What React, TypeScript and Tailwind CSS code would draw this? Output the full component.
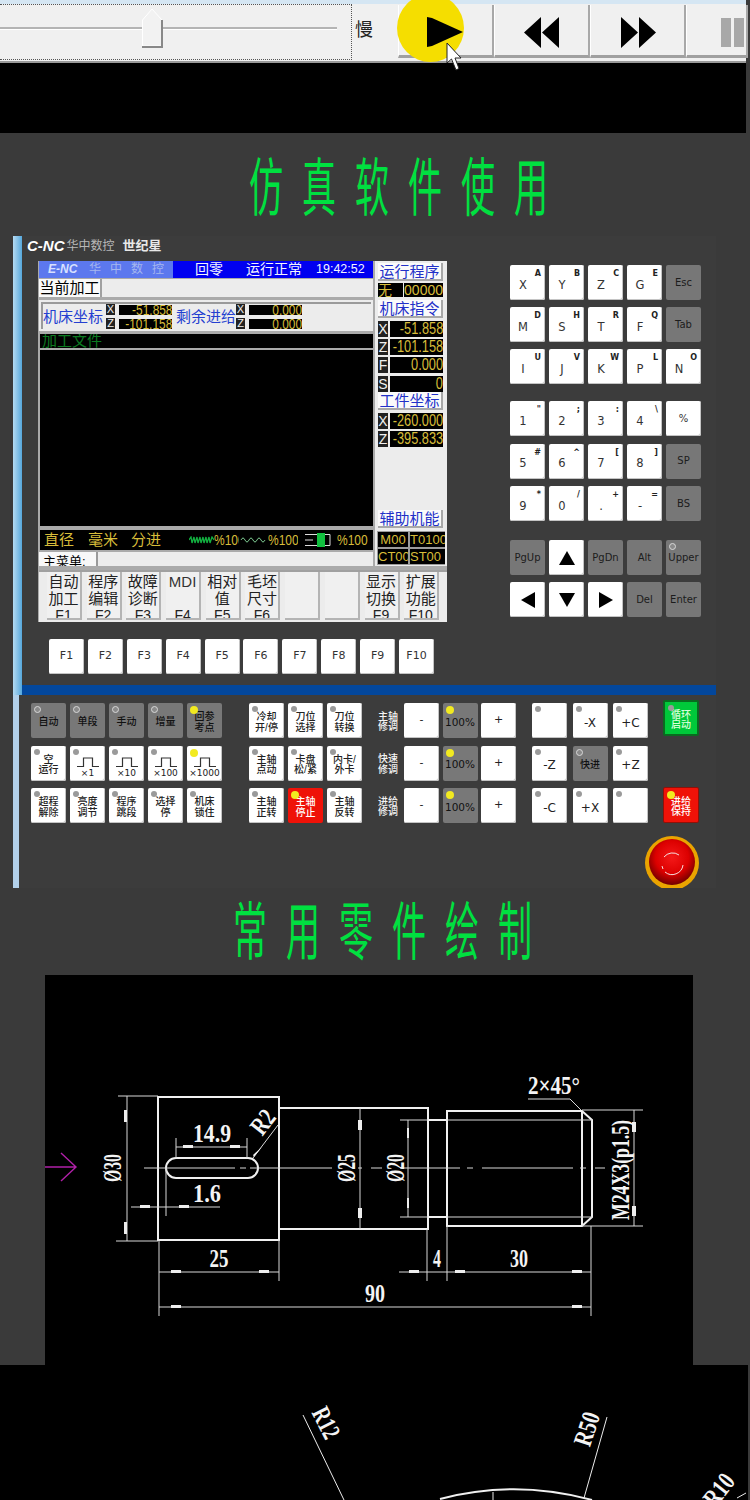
import React from "react";

const GREEN = "text-[#00e040]";

function TitleRow({ text, className }: { text: string; className: string }) {
  return (
    <div className={`flex items-center ${className}`}>
      {text.split("").map((c, i) => (
        <span key={i} className={`inline-block w-[53px] text-[34px] leading-[34px] scale-y-[1.85] origin-center font-normal ${GREEN}`}>
          {c}
        </span>
      ))}
    </div>
  );
}

function Toolbar() {
  const Btn = ({ children, w = "w-[96px]" }: { children?: React.ReactNode; w?: string }) => (
    <div className={`relative ${w} h-[53px] shrink-0 bg-[#f0f0f0] border-l border-l-white border-r-[2px] border-r-[#a8a8a8] border-b-[3px] border-b-[#a0a0a0] pt-[4px] flex items-center justify-center`}>
      {children}
    </div>
  );
  return (
    <section className="w-[746px] h-[133px] bg-black shrink-0">
      <div className="h-[63px] bg-[#e9eef0] border-b-[2px] border-b-[#9a9a9a] overflow-visible">
        <div className="h-[4px] bg-[#d5e6f3]" />
        <div className="flex items-start h-[57px] bg-[#f0f0f0]">
          <div className="relative w-[352px] h-[56px] border-y border-r border-dotted border-[#555] shrink-0">
            <div className="mt-[22px] ml-0 w-[337px] h-[3px] bg-[#b4b4b4] border-b border-white" />
            <div className="absolute left-[142px] top-[3px] w-[21px] h-[40px]">
              <svg width="21" height="40" viewBox="0 0 21 40">
                <path d="M0.5 38 V12 L10 1 L20 12 V38 Z" fill="#f2f2f2" stroke="#fff" />
                <path d="M20 12 V39 H0" fill="none" stroke="#888" strokeWidth="2" />
              </svg>
            </div>
          </div>
          <div className="w-[46px] shrink-0 pl-[3px] pt-[16px] text-[18px] leading-[20px] text-[#222]">慢</div>
          <div className="flex mt-[1px]">
            <Btn>
              <div className="absolute left-[-2px] top-[-11px] w-[67px] h-[68px] rounded-[50%] bg-[#f5de00]" />
              <svg className="relative -ml-[1px]" width="38" height="30" viewBox="0 0 38 30">
                <path d="M1 0 L6 1 L37 15 L6 29 L1 30 Z" fill="#000" />
              </svg>
              <svg className="absolute left-[47px] top-[37px] z-10" width="18" height="30" viewBox="0 0 18 30">
                <path d="M1 1 V21 L5.5 17 L10 28 L13 26.5 L9 16 L15 16 Z" fill="#fff" stroke="#222" strokeWidth="1" />
              </svg>
            </Btn>
            <Btn>
              <svg width="36" height="31" viewBox="0 0 36 31">
                <path d="M0 15.5 L17 0 V31 Z M18 15.5 L35 0 V31 Z" fill="#000" />
              </svg>
            </Btn>
            <Btn>
              <svg width="36" height="31" viewBox="0 0 36 31">
                <path d="M1 0 L18 15.5 L1 31 Z M19 0 L36 15.5 L19 31 Z" fill="#000" />
              </svg>
            </Btn>
            <Btn w="w-[62px]">
              <div className="flex gap-[3px] ml-[10px] self-center w-full pl-[24px]">
                <div className="w-[10px] h-[29px] bg-[#a8a8a8] shrink-0" />
                <div className="w-[10px] h-[29px] bg-[#a8a8a8] shrink-0" />
              </div>
            </Btn>
          </div>
        </div>
      </div>
    </section>
  );
}

const sans = "font-['Liberation_Sans',sans-serif]";

function AxisTag({ c, small }: { c: string; small?: boolean }) {
  return (
    <div className={`${small ? "w-[9px] h-[11px] text-[11px] leading-[11px]" : "w-[10px] h-[16px] text-[14px] leading-[16px]"} bg-[#222] text-[#f0f0f0] text-center ${sans} shrink-0`}>
      {c}
    </div>
  );
}

function SmallValue({ v }: { v: string }) {
  return (
    <div className={`w-[53px] h-[10px] ml-[4px] bg-black text-[#d8bd3a] text-[14px] leading-[10px] flex justify-end overflow-hidden whitespace-nowrap ${sans}`}>
      <span className="shrink-0 origin-right scale-x-[0.85]">{v}</span>
    </div>
  );
}

function CoordPair({ a, b, ml }: { a: string; b: string; ml: string }) {
  return (
    <div className={`flex flex-col gap-[3px] ${ml}`}>
      <div className="flex items-center"><AxisTag c="X" small /><SmallValue v={a} /></div>
      <div className="flex items-center"><AxisTag c="Z" small /><SmallValue v={b} /></div>
    </div>
  );
}

function Pct({ w = "w-[30px]" }: { w?: string }) {
  return (
    <span className={`${w} shrink-0 overflow-hidden text-[15px] ${sans}`}>
      <span className="inline-block origin-left scale-x-[0.8]">%100</span>
    </span>
  );
}

function ScreenLeft() {
  return (
    <div className="w-[334px] ml-[1px] shrink-0 flex flex-col">
      <div className="h-[17px] flex text-[14px] leading-[17px] text-[#f4f4ff]">
        <div className="w-[134px] bg-[#5c78ee] flex items-center pl-[9px] overflow-hidden">
          <span className={`italic font-bold text-[12px] text-[#d8e0ff] ${sans} w-[46px]`}>E-NC</span>
          <span className="text-[12px] text-[#a5b6ee] tracking-[9px] whitespace-nowrap">华中数控</span>
        </div>
        <div className="flex-1 bg-[#0000f0] flex items-center whitespace-nowrap">
          <span className="ml-[22px]">回零</span>
          <span className="ml-[23px]">运行正常</span>
          <span className={`ml-[14px] text-[12.5px] ${sans}`}>19:42:52</span>
        </div>
      </div>
      <div className="h-[18px] mt-[1px] flex bg-[#ececec]">
        <div className="w-[63px] bg-[#fafafa] border-r-[2px] border-[#a0a0a0] text-[15px] leading-[18px] text-center text-black whitespace-nowrap">当前加工</div>
      </div>
      <div className="h-[31px] mt-[3px] bg-[#ececec] pt-[2px] px-[2px]">
        <div className="h-[27px] border-t-[2px] border-l-[2px] border-[#9a9a9a] flex items-center">
          <span className="w-[62px] text-[15px] leading-[20px] text-[#2440d0] whitespace-nowrap">机床坐标</span>
          <CoordPair a="-51.858" b="-101.158" ml="ml-[1px]" />
          <span className="ml-[4px] w-[60px] text-[15px] leading-[20px] text-[#2440d0] whitespace-nowrap">剩余进给</span>
          <CoordPair a="0.000" b="0.000" ml="ml-0" />
        </div>
      </div>
      <div className="h-[14px] mt-[3px] ml-[1px] bg-black text-[#0b7a20] text-[15px] leading-[14px] pl-[2px] overflow-hidden">加工文件</div>
      <div className="h-[176px] mt-[2px] ml-[1px] bg-black" />
      <div className="h-[20px] mt-[4px] ml-[1px] bg-black text-[#d8bd3a] flex items-center text-[15px] leading-[20px] whitespace-nowrap overflow-hidden">
        <span className="ml-[4px]">直径</span>
        <span className="ml-[14px]">毫米</span>
        <span className="ml-[13px]">分进</span>
        <svg className="ml-[28px] shrink-0" width="25" height="8" viewBox="0 0 25 8">
          <path d="M0 4 L2 1 L3 7 L5 1 L6 7 L8 1 L9 7 L11 1 L12 7 L14 1 L15 7 L17 1 L18 7 L20 1 L21 7 L23 1 L25 4" fill="none" stroke="#12b040" strokeWidth="1.3" />
        </svg>
        <Pct w="w-[25px]" />
        <svg className="shrink-0" width="29" height="8" viewBox="0 0 29 8">
          <path d="M2 4 Q4 0 6 4 T10 4 T14 4 T18 4 T22 4 T26 4" fill="none" stroke="#7cc890" strokeWidth="1" />
        </svg>
        <Pct />
        <svg className="ml-[7px] shrink-0" width="26" height="14" viewBox="0 0 26 14">
          <path d="M0 1.5 H14 M0 12.5 H14 M0 7 H8 M20 1.5 H25 V12.5 H20" fill="none" stroke="#ddd" strokeWidth="1" />
          <rect x="12" y="0" width="8" height="14" fill="#12c040" />
        </svg>
        <Pct w="ml-[6px] w-[31px]" />
      </div>
      <div className="h-[14px] mt-[2px] bg-[#ececec] flex overflow-hidden">
        <div className="w-[59px] bg-[#f8f8f8] border-r-[2px] border-[#9a9a9a] text-[13px] leading-[19px] pl-[4px] text-black whitespace-nowrap">主菜单:</div>
      </div>
    </div>
  );
}

function ReadRow({ tag, v, mt = "mt-[2px]" }: { tag: string; v: string; mt?: string }) {
  return (
    <div className={`flex ${mt} h-[16px] w-[65px]`}>
      <AxisTag c={tag} />
      <div className={`ml-[2px] flex-1 min-w-0 bg-black text-[#d8bd3a] text-[16px] leading-[16px] flex justify-end ${sans} whitespace-nowrap overflow-hidden`}>
        <span className="shrink-0 origin-right scale-x-[0.8]">{v}</span>
      </div>
    </div>
  );
}

function BlueHead({ t, mt }: { t: string; mt: string }) {
  return (
    <div className={`${mt} w-[65px] h-[18px] bg-[#fafafa] border-r-[2px] border-b-[2px] border-[#a8a8a8] text-[15px] leading-[17px] text-[#2230c8] text-center whitespace-nowrap`}>{t}</div>
  );
}

function ScreenRight() {
  return (
    <div className="w-[72px] ml-[2px] shrink-0 bg-[#ececec] pl-[3px] pt-[2px] flex flex-col">
      <BlueHead t="运行程序" mt="mt-0" />
      <div className="flex mt-[2px] h-[14px] w-[65px] text-[#d8bd3a] overflow-hidden">
        <div className="w-[28px] bg-black text-[14px] leading-[14px]">无</div>
        <div className={`ml-[1px] flex-1 bg-black text-[14px] leading-[14px] text-right ${sans}`}>00000</div>
      </div>
      <BlueHead t="机床指令" mt="mt-[3px]" />
      <ReadRow tag="X" v="-51.858" mt="mt-[3px]" />
      <ReadRow tag="Z" v="-101.158" />
      <ReadRow tag="F" v="0.000" />
      <ReadRow tag="S" v="0" mt="mt-[3px]" />
      <BlueHead t="工件坐标" mt="mt-0" />
      <ReadRow tag="X" v="-260.000" mt="mt-[3px]" />
      <ReadRow tag="Z" v="-395.833" />
      <BlueHead t="辅助机能" mt="mt-[63px]" />
      <div className={`mt-[3px] h-[34px] w-[68px] -ml-[1px] bg-[#9c9c9c] grid grid-cols-[30px_35px] gap-x-[2px] gap-y-[2px] p-[1px] text-[#d8bd3a] text-[13px] leading-[15px] ${sans} overflow-hidden whitespace-nowrap`}>
        <div className="bg-black text-center h-[15px]">M00</div>
        <div className="bg-black overflow-hidden h-[15px]">T0100</div>
        <div className="bg-black overflow-hidden h-[15px]">CT00</div>
        <div className="bg-black overflow-hidden h-[15px]">ST00</div>
      </div>
    </div>
  );
}

const softBtns: { a?: string; b?: string; f?: string; mdi?: boolean }[] = [
  { a: "自动", b: "加工", f: "F1" },
  { a: "程序", b: "编辑", f: "F2" },
  { a: "故障", b: "诊断", f: "F3" },
  { a: "MDI", f: "F4", mdi: true },
  { a: "相对", b: "值", f: "F5" },
  { a: "毛坯", b: "尺寸", f: "F6" },
  {},
  {},
  { a: "显示", b: "切换", f: "F9" },
  { a: "扩展", b: "功能", f: "F10" },
];

function SoftKeys() {
  return (
    <div className="mt-[4px] h-[52px] ml-[1px] w-[408px] bg-[#ececec] border-t-[2px] border-[#a0a0a0] pl-[8px] flex gap-x-[4.7px] overflow-hidden">
      {softBtns.map((b, i) => (
        <div key={i} className="w-[35px] h-[48px] shrink-0 border-r-[2px] border-b-[2px] border-[#b4b4b4] bg-[#f0f0f0] text-center text-[#222] text-[15px] leading-[17px] overflow-hidden">
          <div className="h-[34px] pt-[1px] whitespace-nowrap">
            {b.mdi ? <span className={`text-[15px] ${sans} text-[#333]`}>MDI</span> : <>{b.a}<br />{b.b}</>}
          </div>
          {b.f && <div className={`text-[14px] leading-[18px] text-[#222] ${sans}`}>{b.f}</div>}
        </div>
      ))}
    </div>
  );
}

function Screen() {
  return (
    <div className="w-[409px] h-[361px] shrink-0 bg-[#aaaaaa] flex flex-col overflow-hidden">
      <div className="flex h-[305px]">
        <ScreenLeft />
        <ScreenRight />
      </div>
      <SoftKeys />
    </div>
  );
}

type KeyDef = { m: string; s?: string; g?: boolean; arrow?: string; small?: boolean };
const keyFont = "font-['DejaVu_Sans',sans-serif]";

function PadKey({ m, s, g, arrow, small }: KeyDef) {
  return (
    <div className={`relative w-[35px] h-[35px] rounded-[2px] ${g ? "bg-[#777777] text-[#1c1c1c]" : "bg-white text-[#333] shadow-[inset_-1px_-1px_0_#c4c4c4]"} ${keyFont} flex items-center justify-center`}>
      {arrow ? (
        <svg width="18" height="18" viewBox="0 0 18 18">
          <path d={arrow} fill="#000" />
        </svg>
      ) : (
        <span className={`${s ? "pr-[9px] pt-[6px]" : ""} ${small ? "text-[10px]" : "text-[11.5px]"} leading-none font-medium`}>{m}</span>
      )}
      {s && <span className="absolute right-[4px] top-[4px] text-[8px] leading-[10px] font-bold text-[#222]">{s}</span>}
    </div>
  );
}

const pad: KeyDef[][] = [
  [{ m: "X", s: "A" }, { m: "Y", s: "B" }, { m: "Z", s: "C" }, { m: "G", s: "E" }, { m: "Esc", g: true, small: true }],
  [{ m: "M", s: "D" }, { m: "S", s: "H" }, { m: "T", s: "R" }, { m: "F", s: "Q" }, { m: "Tab", g: true, small: true }],
  [{ m: "I", s: "U" }, { m: "J", s: "V" }, { m: "K", s: "W" }, { m: "P", s: "L" }, { m: "N", s: "O" }],
  [{ m: "1", s: '"' }, { m: "2", s: ";" }, { m: "3", s: ":" }, { m: "4", s: "\\" }, { m: "%", small: true }],
  [{ m: "5", s: "#" }, { m: "6", s: "^" }, { m: "7", s: "[" }, { m: "8", s: "]" }, { m: "SP", g: true, small: true }],
  [{ m: "9", s: "*" }, { m: "0", s: "/" }, { m: ".", s: "+" }, { m: "-", s: "=" }, { m: "BS", g: true, small: true }],
];

function Keypad() {
  return (
    <div className="ml-[63px] mt-[4px] w-[191px] shrink-0 flex flex-col">
      <div className="grid grid-cols-5 gap-x-[4px] gap-y-[7px]">
        {pad.slice(0, 3).flat().map((k, i) => <PadKey key={i} {...k} />)}
      </div>
      <div className="mt-[17px] grid grid-cols-5 gap-x-[4px] gap-y-[7.5px]">
        {pad.slice(3).flat().map((k, i) => <PadKey key={i} {...k} />)}
      </div>
      <div className="mt-[19px] grid grid-cols-5 gap-x-[4px] gap-y-[7px]">
        <PadKey m="PgUp" g small />
        <PadKey m="" arrow="M9 2 L17 16 H1 Z" />
        <PadKey m="PgDn" g small />
        <PadKey m="Alt" g small />
        <div className="relative">
          <PadKey m="Upper" g small />
          <Led kind="ring" />
        </div>
        <PadKey m="" arrow="M2 9 L16 1 V17 Z" />
        <PadKey m="" arrow="M9 16 L1 2 H17 Z" />
        <PadKey m="" arrow="M16 9 L2 1 V17 Z" />
        <PadKey m="Del" g small />
        <PadKey m="Enter" g small />
      </div>
    </div>
  );
}

function Led({ kind }: { kind: "ring" | "grey" | "yellow" | "bright" }) {
  const cls =
    kind === "ring"
      ? "w-[7px] h-[7px] border border-[#d8d8d8] bg-[#8a8a8a]"
      : kind === "grey"
      ? "w-[6px] h-[6px] bg-[#9a9a9a]"
      : "w-[8px] h-[8px] bg-[#f2ea20]";
  return <span className={`absolute left-[3px] top-[3px] rounded-full ${cls}`} />;
}

type CK = {
  a?: string;
  b?: string;
  tone?: "g" | "w" | "r" | "e";
  led?: "ring" | "grey" | "yellow";
  pulse?: boolean;
  big?: boolean;
  extra?: string;
};

function Pulse() {
  return (
    <svg className="mt-[5px]" width="22" height="11" viewBox="0 0 22 11">
      <path d="M0 9.5 H6.5 V1 H15.5 V9.5 H22" fill="none" stroke="#333" strokeWidth="1.2" />
    </svg>
  );
}

function CtlKey({ a, b, tone = "w", led = "grey", pulse, big, extra = "w-[35px] h-[35px]" }: CK) {
  const t =
    tone === "g"
      ? "bg-[#787878] text-[#111]"
      : tone === "r"
      ? "bg-[#ef1208] text-white"
      : tone === "e"
      ? "bg-[#00c83a] text-[#d8ffd8]"
      : "bg-white text-[#222] shadow-[inset_-1px_-1px_0_#c4c4c4]";
  return (
    <div className={`relative ${extra} rounded-[2px] ${t} flex flex-col items-center justify-center text-center pt-[4px]`}>
      {led && <Led kind={led} />}
      {pulse ? (
        <>
          <Pulse />
          <span className={`${keyFont} text-[9px] leading-[11px] whitespace-nowrap`}>{a}</span>
        </>
      ) : big ? (
        <span className={`${keyFont} text-[12px] leading-[12px] whitespace-nowrap`}>{a}</span>
      ) : (
        <span className="text-[10px] leading-[10.5px] font-medium whitespace-nowrap">
          {a}
          {b && <br />}
          {b}
        </span>
      )}
    </div>
  );
}

const g1: CK[] = [
  { a: "自动", tone: "g", led: "ring" },
  { a: "单段", tone: "g", led: "ring" },
  { a: "手动", tone: "g", led: "ring" },
  { a: "增量", tone: "g", led: "ring" },
  { a: "回参", b: "考点", tone: "g", led: "yellow" },
  { a: "空", b: "运行" },
  { a: "×1", pulse: true },
  { a: "×10", pulse: true },
  { a: "×100", pulse: true },
  { a: "×1000", pulse: true, led: "yellow" },
  { a: "超程", b: "解除" },
  { a: "亮度", b: "调节" },
  { a: "程序", b: "跳段" },
  { a: "选择", b: "停" },
  { a: "机床", b: "锁住" },
];
const g2: CK[] = [
  { a: "冷却", b: "开/停" },
  { a: "刀位", b: "选择" },
  { a: "刀位", b: "转换" },
  { a: "主轴", b: "点动" },
  { a: "卡盘", b: "松/紧" },
  { a: "内卡/", b: "外卡" },
  { a: "主轴", b: "正转" },
  { a: "主轴", b: "停止", tone: "r", led: "yellow" },
  { a: "主轴", b: "反转" },
];
const g4: CK[] = [
  {},
  { a: "-X", big: true },
  { a: "+C", big: true },
  { a: "-Z", big: true },
  { a: "快进", tone: "g", led: "ring" },
  { a: "+Z", big: true },
  { a: "-C", big: true },
  { a: "+X", big: true },
  {},
];

function Override({ label }: { label: string[] }) {
  return (
    <>
      <div className="text-[10px] leading-[10.5px] font-medium text-[#f4f4f4] self-center mt-[3px]">
        {label[0]}
        <br />
        {label[1]}
      </div>
      <div className={`w-[35px] h-[35px] rounded-[2px] bg-white text-[#222] shadow-[inset_-1px_-1px_0_#c4c4c4] flex items-center justify-center text-[11px] ${keyFont}`}>-</div>
      <div className={`relative w-[35px] h-[35px] rounded-[2px] bg-[#787878] text-[#111] flex items-center justify-center pt-[4px] text-[10.5px] ${keyFont}`}>
        <Led kind="yellow" />
        100%
      </div>
      <div className={`w-[35px] h-[35px] rounded-[2px] bg-white text-[#222] shadow-[inset_-1px_-1px_0_#c4c4c4] flex items-center justify-center text-[11px] ${keyFont}`}>+</div>
    </>
  );
}

function EStop() {
  return (
    <svg className="-ml-[18px] mt-[13px] shrink-0" width="54" height="54" viewBox="0 0 54 54">
      <defs>
        <radialGradient id="es" cx="50%" cy="40%" r="60%">
          <stop offset="0%" stopColor="#f41818" />
          <stop offset="60%" stopColor="#dc0000" />
          <stop offset="100%" stopColor="#700000" />
        </radialGradient>
      </defs>
      <circle cx="27" cy="27" r="27" fill="#eaa400" />
      <circle cx="27" cy="26" r="23" fill="url(#es)" />
      <path d="M19 21 A11 11 0 0 1 34 19 M38 29 A11 11 0 0 1 20 36 M17 30 L18 33" fill="none" stroke="#f5e0e0" strokeWidth="1" />
    </svg>
  );
}

function Lower() {
  return (
    <div className="h-[193px] pl-[9px] pt-[8px] flex items-start overflow-hidden">
      <div className="grid grid-cols-5 gap-x-[4px] gap-y-[7.5px] w-[191px] shrink-0">
        {g1.map((k, i) => <CtlKey key={i} {...k} />)}
      </div>
      <div className="ml-[27px] grid grid-cols-3 gap-x-[4px] gap-y-[7.5px] w-[113px] shrink-0">
        {g2.map((k, i) => <CtlKey key={i} {...k} />)}
      </div>
      <div className="ml-[16px] grid grid-cols-[22.5px_35px_35px_35px] gap-x-[3.5px] gap-y-[7.5px] w-[138px] shrink-0">
        <Override label={["主轴", "修调"]} />
        <Override label={["快速", "修调"]} />
        <Override label={["进给", "修调"]} />
      </div>
      <div className="ml-[16px] grid grid-cols-3 gap-x-[5.5px] gap-y-[7.5px] w-[116px] shrink-0">
        {g4.map((k, i) => <CtlKey key={i} {...k} />)}
      </div>
      <div className="ml-[15px] -mt-[3px] w-[36px] shrink-0 flex flex-col">
        <CtlKey a="循环" b="启动" tone="e" extra="w-[36px] h-[36px] border-2 border-[#0a6a20]" />
        <div className="mt-[51px]">
          <CtlKey a="进给" b="保持" tone="r" led="yellow" extra="w-[36px] h-[36px] border border-[#901008]" />
        </div>
        <EStop />
      </div>
    </div>
  );
}

function Panel() {
  return (
    <section className="ml-[13px] w-[703px] h-[652px] shrink-0 flex overflow-hidden bg-[#3c3c3c]">
      <div className="w-[9px] shrink-0 flex flex-col">
        <div className="h-[459px] bg-gradient-to-r from-[#b4daf2] to-[#55a8dc]" />
        <div className="w-[6px] flex-1 bg-[#b2d0ea]" />
      </div>
      <div className="flex-1 min-w-0 flex flex-col">
        <div className="h-[449px] shrink-0">
          <div className="h-[25px] pb-[5px] flex items-center pl-[5px] whitespace-nowrap text-[#e8e8e8]">
            <span className={`italic font-black text-[15px] leading-[14px] text-white ${sans}`}>C-NC</span>
            <span className="ml-[2px] text-[12px] text-[#b8b8b8]">华中数控</span>
            <span className="ml-[8px] text-[13px] font-bold">世纪星</span>
          </div>
          <div className="flex pl-[16px]">
            <Screen />
            <Keypad />
          </div>
          <div className="mt-[17px] pl-[27px] flex gap-x-[3.9px]">
            {["F1", "F2", "F3", "F4", "F5", "F6", "F7", "F8", "F9", "F10"].map((f) => (
              <div key={f} className={`w-[35px] h-[35px] rounded-[2px] bg-white text-[#333] text-[11px] shadow-[inset_-1px_-1px_0_#c4c4c4] flex items-center justify-center ${keyFont}`}>{f}</div>
            ))}
          </div>
        </div>
        <div className="h-[10px] bg-[#03479c] shrink-0" />
        <Lower />
      </div>
    </section>
  );
}

const cadFont = "'Liberation Serif', serif";

function Dim({ x, y, w, t, rot, size = 26 }: { x: number; y: number; w: number; t: string; rot?: number; size?: number }) {
  return (
    <text
      x={x}
      y={y}
      textLength={w}
      lengthAdjust="spacingAndGlyphs"
      textAnchor="middle"
      dominantBaseline="central"
      fontFamily={cadFont}
      fontWeight="bold"
      fontSize={size}
      fill="#f4f4f4"
      transform={rot ? `rotate(${rot} ${x} ${y})` : undefined}
    >
      {t}
    </text>
  );
}

function Ticks({ d }: { d: string }) {
  return <path d={d} fill="#eee" stroke="none" />;
}

function Cad() {
  return (
    <div className="ml-[45px] w-[648px] h-[390px] bg-black shrink-0">
      <svg width="648" height="390" viewBox="45 975 648 390">
        <path d="M44 1167 H76 M61 1153 L76 1167 L61 1181" fill="none" stroke="#b020a8" strokeWidth="1.4" />
        <g fill="none" stroke="#f0f0f0" strokeWidth="2">
          <path d="M158 1097 H279 V1240 H158 Z" />
          <path d="M279 1108 H428 V1229 H279" />
          <path d="M447 1111 H582 L592 1120 V1217 L582 1226 H447 Z" />
          <path d="M582 1111 V1226" />
          <path d="M176 1158 H248 A10 10 0 0 1 248 1178 H176 A10 10 0 0 1 176 1158 Z" />
        </g>
        <g fill="none" stroke="#d8d8d8" strokeWidth="1">
          <path d="M118 1096 H158 M116 1241 H158 M127 1096 V1241" />
          <path d="M144 1168 H235 M240 1168 H246 M250 1168 H332 M358 1168 H362 M371 1168 H382 M400 1168 H460 M467 1168 H473 M482 1168 H573 M580 1168 H586 M595 1168 H605" />
          <path d="M176 1138 V1158 M247 1138 V1158 M176 1147 H247" />
          <path d="M278 1125 L253 1158" />
          <path d="M131 1207 H220 M166 1168 V1216" />
          <path d="M159 1240 V1316 M279 1240 V1281 M159 1272 H279" />
          <path d="M159 1307 H591 M591 1226 V1316" />
          <path d="M360 1108 V1229" />
          <path d="M400 1120 H428 H592 M400 1217 H592 M408 1120 V1217" />
          <path d="M428 1120 H447 M428 1217 H447" stroke="#f0f0f0" strokeWidth="2" />
          <path d="M427 1229 V1281 M447 1226 V1281 M399 1272 H591" />
          <path d="M528 1099 H570 L581 1110" />
          <path d="M582 1110 H643 M582 1226 H643 M634 1110 V1226" />
        </g>
        <Ticks d="M124 1110 h3 v12 h-3 Z M124 1222 h3 v12 h-3 Z M183 1145 h10 v3 h-10 Z M230 1145 h10 v3 h-10 Z M140 1205 h10 v3 h-10 Z M179 1205 h10 v3 h-10 Z M171 1270 h10 v3 h-10 Z M259 1270 h10 v3 h-10 Z M171 1305 h10 v3 h-10 Z M572 1305 h10 v3 h-10 Z M358 1120 h4 v10 h-4 Z M358 1208 h4 v10 h-4 Z M407 1128 h2 v10 h-2 Z M407 1198 h2 v10 h-2 Z M409 1270 h10 v3 h-10 Z M455 1270 h10 v3 h-10 Z M572 1270 h10 v3 h-10 Z M632 1122 h4 v10 h-4 Z M632 1206 h4 v10 h-4 Z M262 1147 l-8 10 l-1 -2 Z" />
        <Dim x={112} y={1168} w={28} t="Ø30" rot={-90} />
        <Dim x={212} y={1133} w={38} t="14.9" />
        <Dim x={263} y={1122} w={24} t="R2" rot={-52} />
        <Dim x={207} y={1193} w={28} t="1.6" />
        <Dim x={219} y={1258} w={19} t="25" />
        <Dim x={375} y={1293} w={20} t="90" />
        <Dim x={346} y={1168} w={28} t="Ø25" rot={-90} />
        <Dim x={395} y={1168} w={28} t="Ø20" rot={-90} />
        <Dim x={437} y={1258} w={8} t="4" />
        <Dim x={519} y={1258} w={18} t="30" />
        <Dim x={620} y={1170} w={100} t="M24X3(p1.5)" rot={-90} />
        <Dim x={554} y={1085} w={52} t="2×45°" />
      </svg>
    </div>
  );
}

function Bottom() {
  return (
    <div className="w-[748px] h-[135px] bg-black shrink-0">
      <svg width="748" height="135" viewBox="0 1365 748 135">
        <g fill="none" stroke="#ececec" strokeWidth="1">
          <path d="M303 1415 L344 1500" />
          <path d="M607 1417 L584 1498" />
          <path d="M737 1498 L746 1493" />
          <path d="M493 1492 V1500" />
        </g>
        <path d="M440 1499 Q515 1479 592 1500" fill="none" stroke="#f0f0f0" strokeWidth="2" />
        <Dim x={326} y={1423} w={32} t="R12" rot={63} />
        <Dim x={587} y={1429} w={34} t="R50" rot={-72} />
        <Dim x={719} y={1490} w={34} t="R10" rot={-52} />
      </svg>
    </div>
  );
}

export default function App() {
  return (
    <div className="w-[750px] h-[1500px] overflow-hidden bg-[#3a3a3a] flex flex-col font-['Liberation_Sans','Noto_Sans_CJK_SC',sans-serif]">
      <Toolbar />
      <div className="h-[103px] shrink-0 pt-[7px] flex items-center">
        <TitleRow text="仿真软件使用" className="ml-[249px]" />
      </div>
      <Panel />
      <div className="h-[87px] shrink-0 flex items-center">
        <TitleRow text="常用零件绘制" className="ml-[233px]" />
      </div>
      <Cad />
      <Bottom />
    </div>
  );
}
